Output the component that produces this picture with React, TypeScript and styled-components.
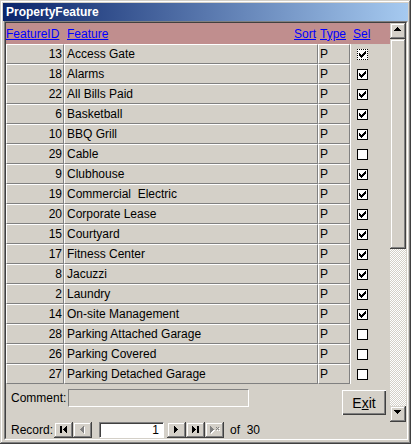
import styled, { createGlobalStyle, css } from "styled-components";

const Global = createGlobalStyle`
  html, body { margin: 0; padding: 0; background: #D4D0C8; }
  body { font-family: "Liberation Sans", Arial, sans-serif; font-size: 12px; }
`;

const raised = css`
  background: #D4D0C8;
  box-shadow: inset -1px -1px #404040, inset 1px 1px #D4D0C8, inset -2px -2px #808080, inset 2px 2px #FFFFFF;
`;

const Window = styled.div`
  width: 411px;
  height: 444px;
  box-sizing: border-box;
  padding: 3px;
  display: flex;
  flex-direction: column;
  background: #D4D0C8;
  box-shadow: inset -1px -1px #404040, inset 1px 1px #D4D0C8, inset -2px -2px #808080, inset 2px 2px #FFFFFF;
`;

const TitleBar = styled.div`
  height: 18px;
  flex: none;
  display: flex;
  align-items: center;
  padding-left: 3px;
  color: #FFFFFF;
  font-weight: bold;
  font-size: 12px;
  background: linear-gradient(to right, #0A246A, #A6CAF0);
`;

const ClientEdge = styled.div`
  flex: 1;
  margin: 0 0 1px 1px;
  display: flex;
  border-top: 1px solid #808080;
  border-left: 1px solid #808080;
  border-right: 1px solid #FFFFFF;
  border-bottom: 1px solid #FFFFFF;
`;

const ClientInner = styled.div`
  flex: 1;
  display: flex;
  flex-direction: column;
  border-top: 1px solid #404040;
  border-left: 1px solid #404040;
  border-right: 1px solid #D4D0C8;
  border-bottom: 1px solid #D4D0C8;
`;

const FormArea = styled.div`
  height: 399px;
  display: flex;
`;

const FormBody = styled.div`
  width: 384px;
  display: flex;
  flex-direction: column;
`;

const HeaderRow = styled.div`
  height: 21px;
  display: flex;
  align-items: center;
  background: #C08E8E;
`;

const HeadLink = styled.span<{ $w: number; $pl?: number; $pr?: number }>`
  width: ${(p) => p.$w}px;
  box-sizing: border-box;
  padding-left: ${(p) => p.$pl ?? 0}px;
  padding-right: ${(p) => p.$pr ?? 0}px;
  display: flex;
  justify-content: space-between;
  color: #0000FF;
  text-decoration: underline;
  white-space: nowrap;
`;

const Row = styled.div`
  height: 20px;
  display: flex;
`;

const Cell = styled.div<{ $w: number; $align?: string; $pl?: number; $pr?: number }>`
  width: ${(p) => p.$w}px;
  box-sizing: border-box;
  border-top: 1px solid #FFFFFF;
  border-left: 1px solid #FFFFFF;
  border-right: 1px solid #808080;
  border-bottom: 1px solid #808080;
  padding-left: ${(p) => p.$pl ?? 0}px;
  padding-right: ${(p) => p.$pr ?? 0}px;
  text-align: ${(p) => p.$align ?? "left"};
  line-height: 18px;
  white-space: pre;
  overflow: hidden;
  color: #000;
`;

const SelCell = styled.div`
  width: 40px;
  box-sizing: border-box;
  border-left: 1px solid #FFFFFF;
  padding-left: 6px;
  display: flex;
  align-items: center;
`;

const CheckBox = styled.div<{ $focused?: boolean }>`
  width: 11px;
  height: 11px;
  box-sizing: border-box;
  background: #FFFFFF;
  border: 1px ${(p) => (p.$focused ? "dotted" : "solid")} #000;
  display: flex;
  align-items: center;
  justify-content: center;
`;

const Footer = styled.div`
  flex: 1;
  display: flex;
  align-items: flex-start;
  padding: 5px 4px 0 5px;
`;

const CommentLabel = styled.span`
  width: 57px;
  line-height: 18px;
`;

const CommentBox = styled.div`
  width: 181px;
  height: 18px;
  box-sizing: border-box;
  border-top: 1px solid #808080;
  border-left: 1px solid #808080;
  border-right: 1px solid #FFFFFF;
  border-bottom: 1px solid #FFFFFF;
`;

const ExitButton = styled.div`
  margin-left: auto;
  margin-top: 1px;
  width: 44px;
  height: 25px;
  display: flex;
  align-items: center;
  justify-content: center;
  font-size: 14px;
  background: #D4D0C8;
  box-shadow: inset 1px 1px #FFFFFF, inset -1px -1px #404040, inset -2px -2px #808080;
`;

const VScroll = styled.div`
  width: 16px;
  display: flex;
  flex-direction: column;
  background-color: #FFFFFF;
  background-image: conic-gradient(#FFFFFF 25%, #D4D0C8 0 50%, #FFFFFF 0 75%, #D4D0C8 0);
  background-size: 2px 2px;
`;

const ScrollButton = styled.div`
  ${raised};
  height: 16px;
  flex: none;
  display: flex;
  align-items: center;
  justify-content: center;
`;

const Thumb = styled.div<{ $h: number }>`
  ${raised};
  height: ${(p) => p.$h}px;
  flex: none;
`;

const Track = styled.div`
  flex: 1;
`;

const NavBar = styled.div`
  height: 16px;
  display: flex;
  align-items: center;
  padding-left: 5px;
`;

const NavLabel = styled.span`
  width: 43px;
`;

const NavButton = styled.div<{ $gap?: number }>`
  ${raised};
  width: 19px;
  height: 16px;
  margin-left: ${(p) => p.$gap ?? 0}px;
  display: flex;
  align-items: center;
  justify-content: center;
`;

const RecordBox = styled.div`
  width: 65px;
  height: 16px;
  margin-left: 7px;
  margin-right: 2px;
  box-sizing: border-box;
  background: #FFFFFF;
  border-top: 1px solid #808080;
  border-left: 1px solid #808080;
  border-right: 1px solid #FFFFFF;
  border-bottom: 1px solid #FFFFFF;
  box-shadow: inset 1px 1px #404040;
  text-align: right;
  padding-right: 4px;
  line-height: 14px;
`;

const OfText = styled.span`
  margin-left: 6px;
  white-space: pre;
`;

type Feature = { id: number; name: string; sel: boolean };

const features: Feature[] = [
  { id: 13, name: "Access Gate", sel: true },
  { id: 18, name: "Alarms", sel: true },
  { id: 22, name: "All Bills Paid", sel: true },
  { id: 6, name: "Basketball", sel: true },
  { id: 10, name: "BBQ Grill", sel: true },
  { id: 29, name: "Cable", sel: false },
  { id: 9, name: "Clubhouse", sel: true },
  { id: 19, name: "Commercial  Electric", sel: true },
  { id: 20, name: "Corporate Lease", sel: true },
  { id: 15, name: "Courtyard", sel: true },
  { id: 17, name: "Fitness Center", sel: true },
  { id: 8, name: "Jacuzzi", sel: true },
  { id: 2, name: "Laundry", sel: true },
  { id: 14, name: "On-site Management", sel: true },
  { id: 28, name: "Parking Attached Garage", sel: false },
  { id: 26, name: "Parking Covered", sel: false },
  { id: 27, name: "Parking Detached Garage", sel: false },
];

const Check = () => (
  <svg width="7" height="7" viewBox="0 0 7 7" shapeRendering="crispEdges">
    <path d="M6 0h1v3h-1v1h-1v1h-1v1h-1v1h-1v-1h-1v-1h-1v-3h1v1h1v1h1v-1h1v-1h1v-1h1z" fill="#000" />
  </svg>
);

// pixel glyphs for the nav / scroll buttons
const LEFT = "M3 0h1v7h-1v-1h-1v-1h-1v-1h-1v-1h1v-1h1v-1h1z";
const RIGHT = "M0 0h1v1h1v1h1v1h1v1h-1v1h-1v1h-1v1H0z";

const Glyph = ({ d, w, disabled }: { d: string; w: number; disabled?: boolean }) => (
  <svg width={w + 1} height={8} viewBox={`0 0 ${w + 1} 8`} shapeRendering="crispEdges">
    {disabled && <path d={d} fill="#FFFFFF" transform="translate(1,1)" />}
    <path d={d} fill={disabled ? "#808080" : "#000"} />
  </svg>
);

const App = () => {
  return (
    <>
      <Global />
      <Window>
        <TitleBar>PropertyFeature</TitleBar>
        <ClientEdge>
          <ClientInner>
            <FormArea>
              <FormBody>
                <HeaderRow>
                  <HeadLink $w={58}>FeatureID</HeadLink>
                  <HeadLink $w={254} $pl={3} $pr={2}>
                    <span>Feature</span>
                    <span>Sort</span>
                  </HeadLink>
                  <HeadLink $w={32} $pl={2}>Type</HeadLink>
                  <HeadLink $w={40} $pl={3}>Sel</HeadLink>
                </HeaderRow>
                {features.map((f, i) => (
                  <Row key={f.id}>
                    <Cell $w={58} $align="right" $pr={1}>{f.id}</Cell>
                    <Cell $w={254} $pl={2}>{f.name}</Cell>
                    <Cell $w={32} $pl={1}>P</Cell>
                    <SelCell>
                      <CheckBox $focused={i === 0}>{f.sel && <Check />}</CheckBox>
                    </SelCell>
                  </Row>
                ))}
                <Footer>
                  <CommentLabel>Comment:</CommentLabel>
                  <CommentBox />
                  <ExitButton>
                    <span>E<u>x</u>it</span>
                  </ExitButton>
                </Footer>
              </FormBody>
              <VScroll>
                <ScrollButton>
                  <Glyph d="M3 0h1v1h1v1h1v1h1v1H0V3h1V2h1V1h1z" w={7} />
                </ScrollButton>
                <Thumb $h={210} />
                <Track />
                <ScrollButton>
                  <Glyph d="M0 0h7v1h-1v1h-1v1h-1v1h-1v-1h-1v-1h-1v-1H0z" w={7} />
                </ScrollButton>
              </VScroll>
            </FormArea>
            <NavBar>
              <NavLabel>Record:</NavLabel>
              <NavButton>
                <Glyph d={"M0 0h2v7H0z" + LEFT.replace("M3 0", "M6 0").replace("v7h-1", "v7h-1")} w={7} />
              </NavButton>
              <NavButton>
                <Glyph d={LEFT} w={4} disabled />
              </NavButton>
              <RecordBox>1</RecordBox>
              <NavButton $gap={1}>
                <Glyph d={RIGHT} w={4} />
              </NavButton>
              <NavButton>
                <Glyph d={RIGHT + "M5 0h2v7H5z"} w={7} />
              </NavButton>
              <NavButton>
                <Glyph d={RIGHT + "M6 1h1v1h1v-1h1v1h-1v1h1v1h-1v-1h-1v1h-1v-1h1v-1h-1z"} w={9} disabled />
              </NavButton>
              <OfText>of  30</OfText>
            </NavBar>
          </ClientInner>
        </ClientEdge>
      </Window>
    </>
  );
};

export default App;
